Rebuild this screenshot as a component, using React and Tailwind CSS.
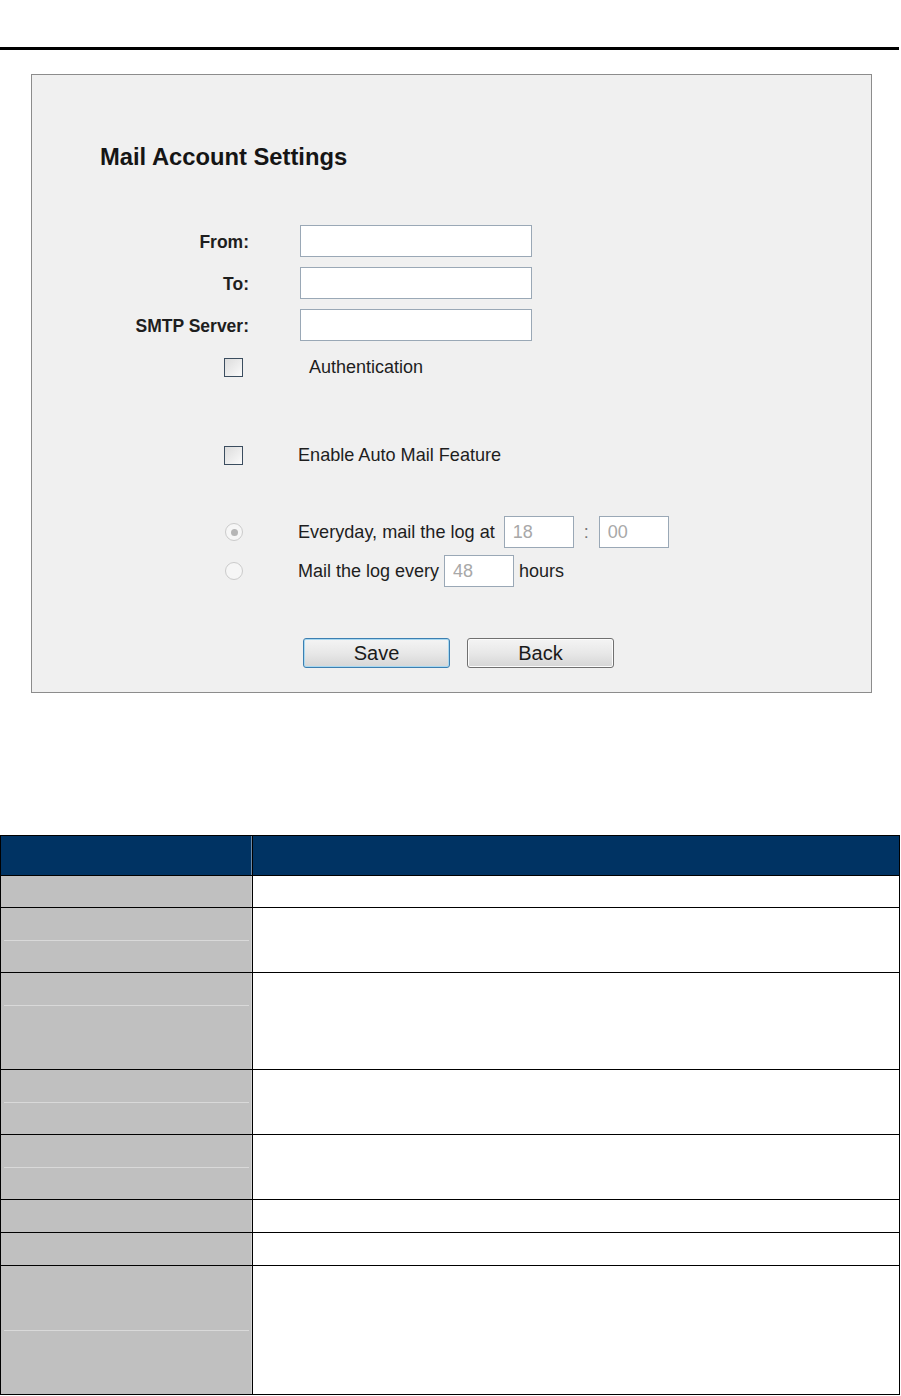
import React from "react";

const Field = ({ label }) => (
  <div className="flex items-center h-[32px]">
    <span className="w-[217px] pt-[3px] text-right text-[17.5px] font-bold text-[#1e1e1e] leading-none">{label}</span>
    <input
      type="text"
      className="ml-[51px] w-[232px] h-[32px] border border-[#9aa8b6] bg-white outline-none"
    />
  </div>
);

const Box = () => (
  <span className="block w-[19px] h-[19px] border border-[#3b4d5f] bg-gradient-to-br from-[#dcdcdc] to-[#fbfbfb]" />
);

const Radio = ({ checked }) => (
  <span className="flex items-center justify-center w-[18px] h-[18px] rounded-full border border-[#cbcbcb] bg-[#f6f6f6]">
    {checked && <span className="block w-[7px] h-[7px] rounded-full bg-[#b5b5b5]" />}
  </span>
);

const SmallInput = ({ value, className }) => (
  <input
    type="text"
    disabled
    value={value}
    readOnly
    className={"w-[70px] h-[32px] border border-[#9aa8b6] bg-white pl-[8px] text-[18px] text-[#a8a8a8] outline-none " + className}
  />
);

const Btn = ({ children, primary }) => (
  <button
    className={
      "w-[147px] h-[30px] rounded-[3px] border text-[20px] leading-none text-[#1a1a1a] bg-gradient-to-b from-[#f4f4f4] via-[#e8e8e8] to-[#d6d6d6] " +
      (primary ? "border-[#3c7fb1] shadow-[inset_0_0_0_1px_#a8d8f0]" : "border-[#707070] shadow-[inset_0_0_0_1px_#fcfcfc]")
    }
  >
    {children}
  </button>
);

const rows = [
  { h: "h-[32px]", split: null },
  { h: "h-[65px]", split: "h-[32px]" },
  { h: "h-[97px]", split: "h-[32px]" },
  { h: "h-[65px]", split: "h-[32px]" },
  { h: "h-[65px]", split: "h-[32px]" },
  { h: "h-[33px]", split: null },
  { h: "h-[33px]", split: null },
  { h: "h-[129px]", split: "h-[64px]" },
];

export default function App() {
  return (
    <div className="w-[901px] min-h-[1396px] bg-white font-['Liberation_Sans',Arial,sans-serif] text-[#1e1e1e]">
      <div className="pt-[47px]">
        <div className="w-[899px] h-[3px] bg-black" />
      </div>

      <div className="ml-[31px] mt-[24px] w-[841px] border border-[#8c8c8c] bg-[#f0f0f0] pt-[70px] pb-[24px]">
        <h1 className="ml-[68px] h-[23px] text-[23.75px] font-bold leading-[23px] text-[#151515]">Mail Account Settings</h1>

        <div className="mt-[57px] flex flex-col gap-[10px]">
          <Field label="From:" />
          <Field label="To:" />
          <Field label="SMTP Server:" />
        </div>

        <div className="mt-[16px] flex items-center h-[20px] pl-[192px]">
          <Box />
          <span className="ml-[66px] text-[18px] leading-none">Authentication</span>
        </div>

        <div className="mt-[68px] flex items-center h-[20px] pl-[192px]">
          <Box />
          <span className="ml-[55px] text-[18.1px] leading-none">Enable Auto Mail Feature</span>
        </div>

        <div className="mt-[51px] flex items-center h-[32px] pl-[193px]">
          <Radio checked />
          <span className="ml-[55px] text-[18.1px] leading-none">Everyday, mail the log at</span>
          <SmallInput value="18" className="ml-[9px]" />
          <span className="mx-[10px] text-[18px] leading-none text-[#777]">:</span>
          <SmallInput value="00" />
        </div>

        <div className="mt-[7px] flex items-center h-[32px] pl-[193px]">
          <Radio />
          <span className="ml-[55px] text-[18px] leading-none">Mail the log every</span>
          <SmallInput value="48" className="ml-[5px]" />
          <span className="ml-[5px] text-[18px] leading-none">hours</span>
        </div>

        <div className="mt-[51px] flex gap-[17px] pl-[271px]">
          <Btn primary>Save</Btn>
          <Btn>Back</Btn>
        </div>
      </div>

      <div className="mt-[142px] w-[900px] border-x border-t border-black">
        <div className="flex h-[40px] border-b border-black bg-[#003363]">
          <div className="w-[252px] border-r border-black shadow-[inset_-1px_0_0_#6f8aa6]" />
          <div className="flex-1" />
        </div>
        {rows.map((r, i) => (
          <div key={i} className={"flex border-b border-black " + r.h}>
            <div className="w-[252px] border-r border-black bg-[#c0c0c0] shadow-[inset_-1px_0_0_#d4d4d4] flex flex-col">
              {r.split && (
                <>
                  <div className={r.split} />
                  <div className="mx-[3px] h-px bg-[#d9d9d9]" />
                </>
              )}
            </div>
            <div className="flex-1 bg-white" />
          </div>
        ))}
      </div>
    </div>
  );
}
